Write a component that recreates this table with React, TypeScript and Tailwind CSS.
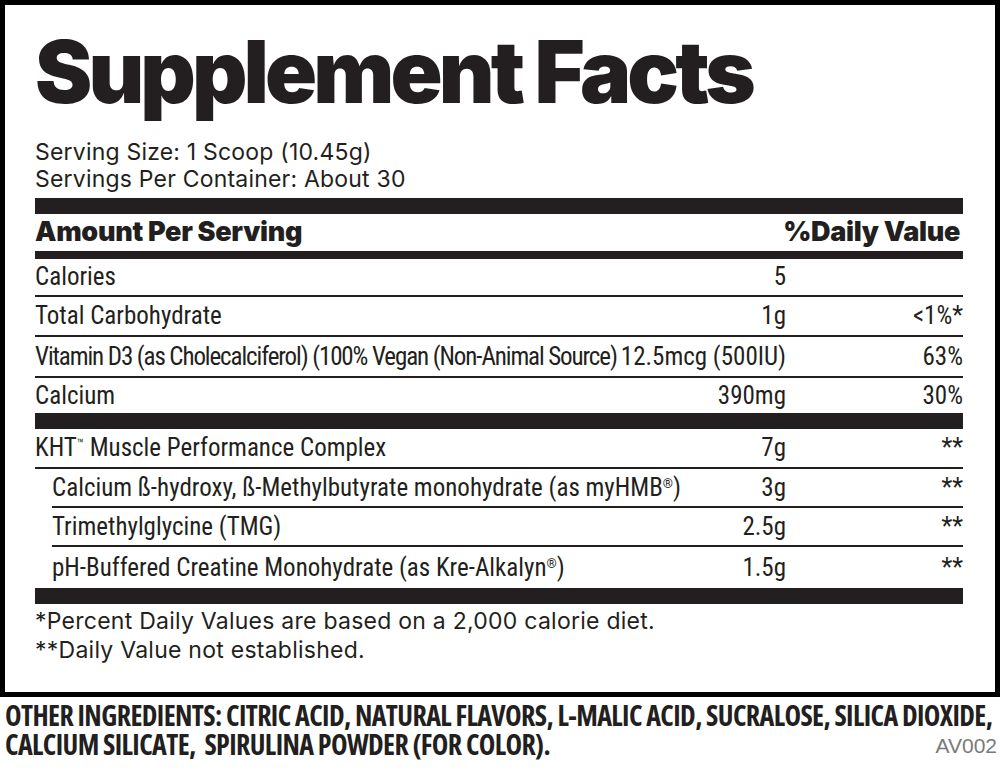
import React from "react";

const cond = "font-['Roboto_Condensed','Roboto',sans-serif] font-stretch-[75%]";

function Row({
  name,
  amt,
  dv,
  h,
  indent = false,
  line = true,
}: {
  name: React.ReactNode;
  amt: string;
  dv: string;
  h: string;
  indent?: boolean;
  line?: boolean;
}) {
  return (
    <div>
      <div className={`flex items-center ${h} ${indent ? "pl-[17px]" : ""}`}>
        <div className="flex-1 whitespace-nowrap">{name}</div>
        <div className="text-right whitespace-nowrap">{amt}</div>
        <div className="w-[177px] text-right whitespace-nowrap">{dv}</div>
      </div>
      {line && <div className={`h-[2px] bg-[#231f20] ${indent ? "ml-[17px]" : ""}`} />}
    </div>
  );
}

export default function App() {
  return (
    <div className="w-[1000px] h-[777px] bg-white text-[#231f20]">
      <div className="w-[1000px] h-[697px] border-[5px] border-black pl-[30px] pr-[32px]">
        <div className="pt-[24px] h-[109px]">
          <h1 className="font-['Inter',sans-serif] font-black text-[86px] leading-[86px] tracking-[-3.9px] whitespace-nowrap">
            Supplement Facts
          </h1>
        </div>
        <div className="pt-[25px] font-['Inter',sans-serif] text-[23px] leading-[27px] tracking-[0.2px]">
          <div>Serving Size: 1 Scoop (10.45g)</div>
          <div>Servings Per Container: About 30</div>
        </div>
        <div className="mt-[5px] h-[16px] bg-[#231f20]" />
        <div className="flex items-center justify-between h-[37px] pr-[3px] font-['Inter',sans-serif] font-black text-[27px] tracking-[-0.3px]">
          <span>Amount Per Serving</span>
          <span>%Daily Value</span>
        </div>
        <div className="h-[8px] bg-[#231f20]" />
        <div className={`${cond} text-[25px]`}>
          <Row name="Calories" amt="5" dv="" h="h-[36px]" />
          <Row name="Total Carbohydrate" amt="1g" dv="<1%*" h="h-[38px]" />
          <Row
            name={
              <span className="tracking-[-1.1px]">
                Vitamin D3 (as Cholecalciferol) (100% Vegan (Non-Animal Source)
              </span>
            }
            amt="12.5mcg (500IU)"
            dv="63%"
            h="h-[39px]"
          />
          <Row name="Calcium" amt="390mg" dv="30%" h="h-[35px]" line={false} />
          <div className="h-[16px] bg-[#231f20]" />
          <Row
            name={
              <>
                KHT<span className="text-[13px] align-[8px]">™</span> Muscle Performance Complex
              </>
            }
            amt="7g"
            dv="**"
            h="h-[38px]"
          />
          <Row
            name={
              <>
                Calcium ß-hydroxy, ß-Methylbutyrate monohydrate (as myHMB
                <span className="text-[13px] align-[8px]">®</span>)
              </>
            }
            amt="3g"
            dv="**"
            h="h-[37px]"
            indent
          />
          <Row name="Trimethylglycine (TMG)" amt="2.5g" dv="**" h="h-[37px]" indent />
          <Row
            name={
              <>
                pH-Buffered Creatine Monohydrate (as Kre-Alkalyn
                <span className="text-[13px] align-[8px]">®</span>)
              </>
            }
            amt="1.5g"
            dv="**"
            h="h-[41px]"
            indent
            line={false}
          />
          <div className="h-[16px] bg-[#231f20]" />
        </div>
        <div className="pt-[3px] font-['Inter',sans-serif] text-[23px] leading-[29px] tracking-[0.25px]">
          <div>*Percent Daily Values are based on a 2,000 calorie diet.</div>
          <div>**Daily Value not established.</div>
        </div>
      </div>
      <div className="pl-[5px] pr-[3px] pt-[4px] font-['Open_Sans',sans-serif] font-stretch-[75%] font-bold text-[28px] leading-[29px] tracking-[-0.6px]">
        <div className="whitespace-nowrap">
          OTHER INGREDIENTS: CITRIC ACID, NATURAL FLAVORS, L-MALIC ACID, SUCRALOSE, SILICA DIOXIDE,
        </div>
        <div className="flex items-end justify-between">
          <span className="whitespace-pre">CALCIUM SILICATE,  SPIRULINA POWDER (FOR COLOR).</span>
          <span className="font-['Liberation_Sans',sans-serif] font-stretch-normal font-normal text-[21px] leading-[26px] tracking-normal text-[#7a7a7a]">
            AV002
          </span>
        </div>
      </div>
    </div>
  );
}
